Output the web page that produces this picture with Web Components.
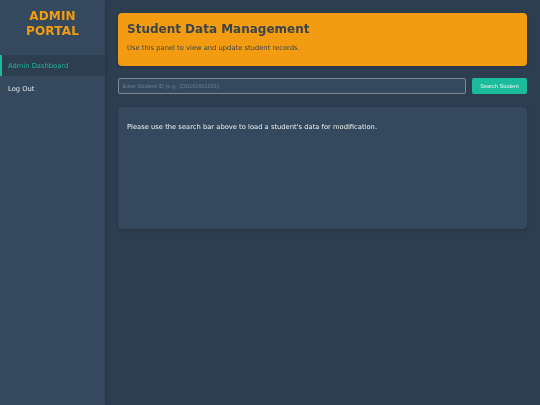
<!DOCTYPE html>
<html lang="en">
<head>
<meta charset="utf-8">
<title>Admin Portal</title>
<style>
  html, body { margin: 0; height: 100%; background: #2c3e50; }
  body { font-family: "DejaVu Sans", sans-serif; color: #ecf0f1; overflow: hidden; }
</style>
</head>
<body>
<admin-layout>
  <admin-sidebar slot="side" titulo="ADMIN PORTAL">
    <nav-link activo>Admin Dashboard</nav-link>
    <nav-link>Log Out</nav-link>
  </admin-sidebar>
  <page-banner titulo="Student Data Management">Use this panel to view and update student records.</page-banner>
  <student-search></student-search>
  <info-panel>Please use the search bar above to load a student's data for modification.</info-panel>
</admin-layout>

<script>
  // the reference is a downscaled capture, so its text is slightly soft
  const SOFT = 'filter: blur(0.3px);';

  class AdminLayout extends HTMLElement {
    constructor() {
      super();
      this.attachShadow({ mode: 'open' });
      this.shadowRoot.innerHTML = `
        <style>
          :host { display: flex; width: 540px; height: 405px; background: #2c3e50; }
          main { flex: 1; min-width: 0; padding: 13px 13px 0 13px; display: flex; flex-direction: column; }
        </style>
        <slot name="side"></slot>
        <main><slot></slot></main>
      `;
    }
  }

  class AdminSidebar extends HTMLElement {
    constructor() {
      super();
      this.attachShadow({ mode: 'open' });
    }

    connectedCallback() {
      this.shadowRoot.innerHTML = `
        <style>
          :host {
            display: block;
            box-sizing: border-box;
            flex: 0 0 105px;
            width: 105px;
            height: 405px;
            background: #34495e;
            box-shadow: 1px 0 4px rgba(0, 0, 0, 0.15);
            padding-top: 8.5px;
          }
          h1 {
            margin: 0 0 16.5px;
            padding: 0 8px;
            font-size: 12px;
            line-height: 15px;
            font-weight: 700;
            letter-spacing: 0.2px;
            text-align: center;
            color: #f39c12;
            ${SOFT}
          }
          nav { display: flex; flex-direction: column; gap: 1.5px; }
        </style>
        <h1>${this.getAttribute('titulo')}</h1>
        <nav><slot></slot></nav>
      `;
    }
  }

  class NavLink extends HTMLElement {
    constructor() {
      super();
      this.attachShadow({ mode: 'open' });
      this.shadowRoot.innerHTML = `
        <style>
          :host {
            display: block;
            box-sizing: border-box;
            height: 21px;
            padding-left: 8px;
            font-size: 6.75px;
            color: #e2e7ea;
          }
          :host([activo]) {
            padding-left: 6px;
            background: #2c3e50;
            border-left: 2px solid #1abc9c;
            color: #1abc9c;
          }
          span { display: block; line-height: 22.5px; ${SOFT} }
        </style>
        <span><slot></slot></span>
      `;
    }
  }

  class PageBanner extends HTMLElement {
    constructor() {
      super();
      this.attachShadow({ mode: 'open' });
    }

    connectedCallback() {
      this.shadowRoot.innerHTML = `
        <style>
          :host {
            display: block;
            box-sizing: border-box;
            height: 53px;
            padding: 8px 9px 0;
            background: #f39c12;
            border-radius: 4px;
            box-shadow: 0 1px 3px rgba(0, 0, 0, 0.2);
            color: #3a444c;
          }
          h2 { margin: 0 0 6px; font-size: 12px; line-height: 16px; font-weight: 700; ${SOFT} }
          p { margin: 0; font-size: 6.75px; line-height: 11px; ${SOFT} }
        </style>
        <h2>${this.getAttribute('titulo')}</h2>
        <p><slot></slot></p>
      `;
    }
  }

  class StudentSearch extends HTMLElement {
    constructor() {
      super();
      this.attachShadow({ mode: 'open' });
      this.shadowRoot.innerHTML = `
        <style>
          :host { display: flex; gap: 6px; height: 16px; margin-top: 12px; }
          input {
            flex: 1;
            min-width: 0;
            box-sizing: border-box;
            height: 16px;
            margin: 0;
            padding: 0 3.5px;
            background: #34495e;
            border: 0.75px solid #7c8a98;
            border-radius: 2px;
            outline: none;
            font: 5.6px "Liberation Sans", Arial, sans-serif;
            color: #ecf0f1;
            ${SOFT}
          }
          input::placeholder { color: #6f7e8b; opacity: 1; }
          button {
            flex: 0 0 55px;
            height: 16px;
            padding: 0;
            background: #1abc9c;
            border: none;
            border-radius: 2px;
            font: 5.6px "Liberation Sans", Arial, sans-serif;
            color: #ecf0f1;
            ${SOFT}
          }
        </style>
        <input type="text" placeholder="Enter Student ID (e.g., 230161601031)">
        <button type="button">Search Student</button>
      `;
    }
  }

  class InfoPanel extends HTMLElement {
    constructor() {
      super();
      this.attachShadow({ mode: 'open' });
      this.shadowRoot.innerHTML = `
        <style>
          :host {
            display: block;
            box-sizing: border-box;
            height: 122px;
            margin-top: 13px;
            padding: 14.5px 9px 0;
            background: #34495e;
            border-radius: 4px;
            box-shadow: 0 1px 3px rgba(0, 0, 0, 0.2);
            font-size: 6.75px;
            line-height: 11px;
            color: #ecf0f1;
          }
          div { ${SOFT} }
        </style>
        <div><slot></slot></div>
      `;
    }
  }

  customElements.define('admin-layout', AdminLayout);
  customElements.define('admin-sidebar', AdminSidebar);
  customElements.define('nav-link', NavLink);
  customElements.define('page-banner', PageBanner);
  customElements.define('student-search', StudentSearch);
  customElements.define('info-panel', InfoPanel);
</script>
</body>
</html>
